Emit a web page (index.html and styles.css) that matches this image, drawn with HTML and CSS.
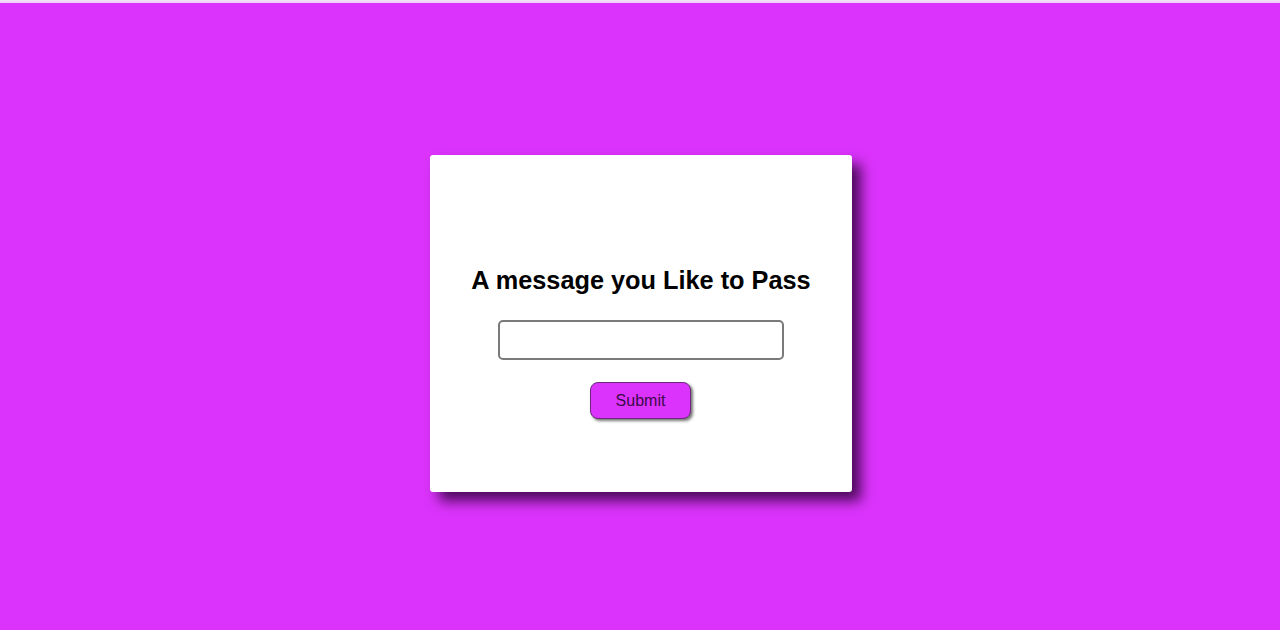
FILE: index.html
```html
<!DOCTYPE html>
<html>
<head>
<meta charset="utf-8">
<link rel="stylesheet" href="styles.css">
</head>
<body>
<div class="topline"></div>
<main class="stage">
  <form class="card">
    <h1 class="title">A message you Like to Pass</h1>
    <input class="field" type="text">
    <button class="submit" type="button">Submit</button>
  </form>
</main>
</body>
</html>
```

FILE: styles.css
```css
html, body {
  margin: 0;
  padding: 0;
  height: 630px;
  overflow: hidden;
}
body {
  background: #db33fb;
  font-family: "Liberation Sans", Arial, sans-serif;
  display: flex;
  flex-direction: column;
}
.topline {
  height: 3px;
  background: linear-gradient(#f4e4f8, #efc8f7);
  flex: none;
}
.stage {
  flex: 1;
  display: flex;
  justify-content: center;
  align-items: flex-start;
  padding-top: 152px;
  padding-left: 2px;
}
.card {
  width: 422px;
  height: 337px;
  box-sizing: border-box;
  background: #fff;
  border-radius: 3px;
  box-shadow: 9px 9px 13px rgba(40, 0, 50, 0.8);
  display: flex;
  flex-direction: column;
  align-items: center;
  padding-top: 110px;
}
.title {
  margin: 0;
  font-size: 25.3px;
  font-weight: bold;
  color: #000;
  line-height: 30px;
}
.field {
  margin-top: 25px;
  width: 286px;
  height: 40px;
  box-sizing: border-box;
  border: 2px solid #7a7a7a;
  border-radius: 5px;
  background: #fff;
  font-size: 16px;
}
.submit {
  margin-top: 22px;
  margin-left: -1px;
  width: 101px;
  height: 37px;
  box-sizing: border-box;
  background: #db33fb;
  border: 1.5px solid #6a2a78;
  border-radius: 8px;
  box-shadow: 2px 2px 3px #777;
  font-family: "Liberation Sans", Arial, sans-serif;
  font-size: 16px;
  color: #3a0a48;
  padding: 0;
}
```
